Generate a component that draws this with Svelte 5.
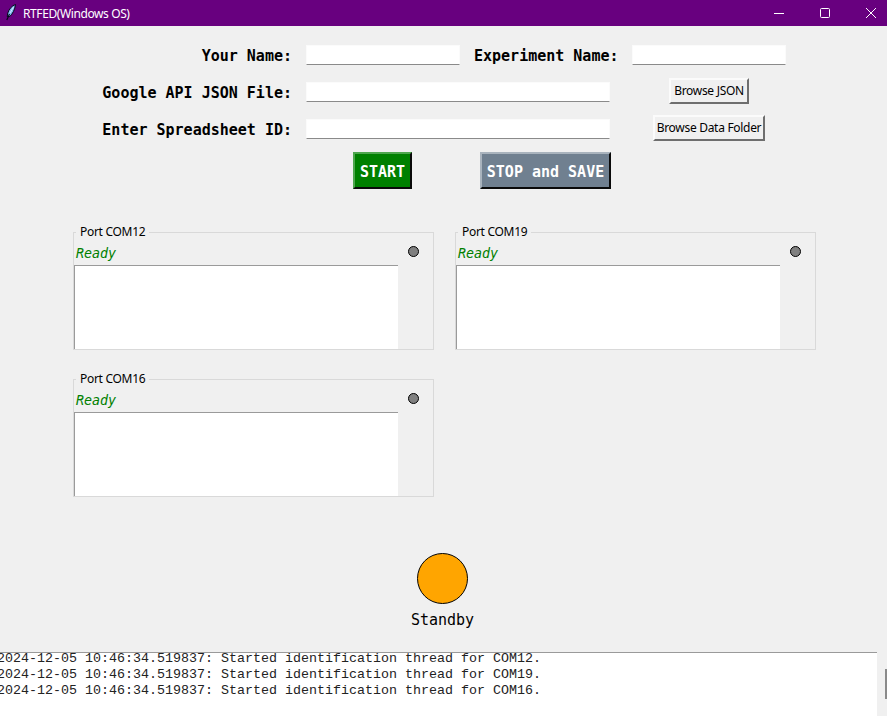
<script>
  const ports = ['COM12', 'COM19', 'COM16'];
  const logs = ports.map((p) => `2024-12-05 10:46:34.519837: Started identification thread for ${p}.`);
</script>

<div class="window">
  <header class="titlebar">
    <svg class="feather" width="12" height="18" viewBox="0 0 12 18">
      <path d="M10.5 0.5 C7 1.5 4 5 2.8 9 L2.2 12.5 L4.8 12.5 C7.5 10 10 5.5 10.5 0.5 Z" fill="#7fb9f2" stroke="#06061a" stroke-width="1" />
      <path d="M8.5 3 L5 9" stroke="#d8ecff" stroke-width="1" fill="none" />
      <path d="M4.5 10 L1.8 16" stroke="#06061a" stroke-width="1.2" fill="none" />
    </svg>
    <span class="title">RTFED(Windows OS)</span>
    <div class="controls">
      <svg width="12" height="12" viewBox="0 0 12 12"><path d="M1 6.5H11" stroke="#fff" /></svg>
      <svg width="12" height="12" viewBox="0 0 12 12"><rect x="1.5" y="1.5" width="9" height="9" rx="1" fill="none" stroke="#fff" /></svg>
      <svg width="12" height="12" viewBox="0 0 12 12"><path d="M1 1L11 11M11 1L1 11" stroke="#fff" /></svg>
    </div>
  </header>

  <section class="form">
    <label class="lbl">Your Name:</label>
    <div class="entry short"></div>
    <label class="lbl">Experiment Name:</label>
    <div class="entry short"></div>

    <label class="lbl">Google API JSON File:</label>
    <div class="entry long"></div>
    <button class="browse json">Browse JSON</button>

    <label class="lbl">Enter Spreadsheet ID:</label>
    <div class="entry long"></div>
    <button class="browse folder">Browse Data Folder</button>
  </section>

  <div class="actions">
    <button class="action start">START</button>
    <button class="action stop">STOP and SAVE</button>
  </div>

  <section class="ports">
    {#each ports as port}
      <div class="port">
        <span class="legend">Port {port}</span>
        <div class="port-main">
          <div class="ready">Ready</div>
          <div class="port-text"></div>
        </div>
        <span class="led"></span>
      </div>
    {/each}
  </section>

  <section class="status">
    <span class="lamp"></span>
    <span class="status-text">Standby</span>
  </section>

  <section class="log">
    <div class="lines">
      {#each logs as line}
        <div class="line">{line}</div>
      {/each}
    </div>
  </section>
  <span class="thumb"></span>
</div>

<style>
  :global(body) {
    margin: 0;
    background: #f0f0f0;
    overflow: hidden;
  }
  .window {
    position: relative;
    width: 887px;
    height: 716px;
    background: #f0f0f0;
    display: flex;
    flex-direction: column;
    overflow: hidden;
    font-family: "Noto Sans", "Open Sans", sans-serif;
    color: #000;
  }
  .titlebar {
    height: 26px;
    flex: none;
    background: #68007f;
    color: #fff;
    display: flex;
    align-items: center;
    padding-left: 5px;
  }
  .feather {
    margin-right: 6px;
  }
  .title {
    font-size: 12px;
    letter-spacing: -0.4px;
  }
  .controls {
    margin-left: auto;
    display: flex;
    gap: 34px;
    padding-right: 10px;
  }
  .form {
    margin-top: 11px;
    display: grid;
    grid-template-columns: 292px 154px 144px 154px;
    column-gap: 14px;
    grid-auto-rows: 37px;
    align-items: center;
    width: 786px;
  }
  .lbl {
    font: 700 15px "DejaVu Sans Mono", monospace;
    text-align: right;
    white-space: nowrap;
  }
  .entry {
    height: 20px;
    margin-bottom: 2px;
    box-sizing: border-box;
    background: #fff;
    border: 1px solid #fbfbfb;
    border-bottom: 1px solid #8a8a8a;
  }
  .long {
    grid-column: span 2;
    width: 304px;
  }
  .browse {
    justify-self: center;
    height: 26px;
    margin-bottom: 3px;
    padding: 0;
    box-sizing: border-box;
    background: #f0f0f0;
    color: #000;
    border: 2px solid;
    border-color: #fbfbfb #6e6e6e #6e6e6e #fbfbfb;
    font: 12px/1 "Noto Sans", sans-serif;
    letter-spacing: -0.3px;
    white-space: nowrap;
  }
  .json {
    width: 80px;
  }
  .folder {
    width: 112px;
  }
  .actions {
    margin-top: 4px;
    display: flex;
    padding-left: 353px;
    gap: 68px;
  }
  .action {
    height: 37px;
    box-sizing: border-box;
    padding: 3px 0 0;
    color: #fff;
    border: 2px solid;
    font: 700 15px/1 "DejaVu Sans Mono", monospace;
    white-space: pre;
  }
  .start {
    width: 59px;
    background: #008000;
    border-color: #4ea64e #0a0a0a #0a0a0a #4ea64e;
  }
  .stop {
    width: 131px;
    background: #708090;
    border-color: #a9b3bd #0a0a0a #0a0a0a #a9b3bd;
  }
  .ports {
    margin-top: 43px;
    padding-left: 73px;
    display: grid;
    grid-template-columns: 361px 361px;
    column-gap: 21px;
    row-gap: 29px;
  }
  .port {
    position: relative;
    height: 118px;
    box-sizing: border-box;
    border: 1px solid #d9d9d9;
    display: flex;
  }
  .legend {
    position: absolute;
    left: 2px;
    top: -9px;
    padding: 0 4px;
    background: #f0f0f0;
    font-size: 12px;
    line-height: 16px;
    letter-spacing: -0.3px;
  }
  .port-main {
    width: 324px;
    display: flex;
    flex-direction: column;
  }
  .ready {
    height: 32px;
    box-sizing: border-box;
    padding: 13px 0 0 2px;
    font: italic 13.33px/16px "DejaVu Sans Mono", monospace;
    color: #008000;
  }
  .port-text {
    flex: 1;
    background: #fff;
    border-top: 1px solid #9a9a9a;
    border-left: 1px solid #9a9a9a;
  }
  .led {
    width: 11px;
    height: 11px;
    box-sizing: border-box;
    border-radius: 50%;
    background: #808080;
    border: 1px solid #000;
    margin: 13px 0 0 10px;
  }
  .status {
    margin-top: 56px;
    padding-right: 2px;
    display: flex;
    flex-direction: column;
    align-items: center;
  }
  .lamp {
    width: 51px;
    height: 51px;
    box-sizing: border-box;
    border-radius: 50%;
    background: #ffa500;
    border: 1px solid #000;
  }
  .status-text {
    margin-top: 6px;
    font: 15px/20px "DejaVu Sans Mono", monospace;
  }
  .log {
    position: absolute;
    left: 0;
    top: 652px;
    width: 877px;
    height: 64px;
    box-sizing: border-box;
    background: #fff;
    border-top: 1px solid #9a9a9a;
    font: 13.33px/16px "Liberation Mono", monospace;
    color: #222;
    white-space: pre;
  }
  .lines {
    margin: -2px 0 0 -3px;
  }
  .thumb {
    position: absolute;
    left: 885px;
    top: 669px;
    width: 2px;
    height: 30px;
    background: #8a8a8a;
  }
</style>
